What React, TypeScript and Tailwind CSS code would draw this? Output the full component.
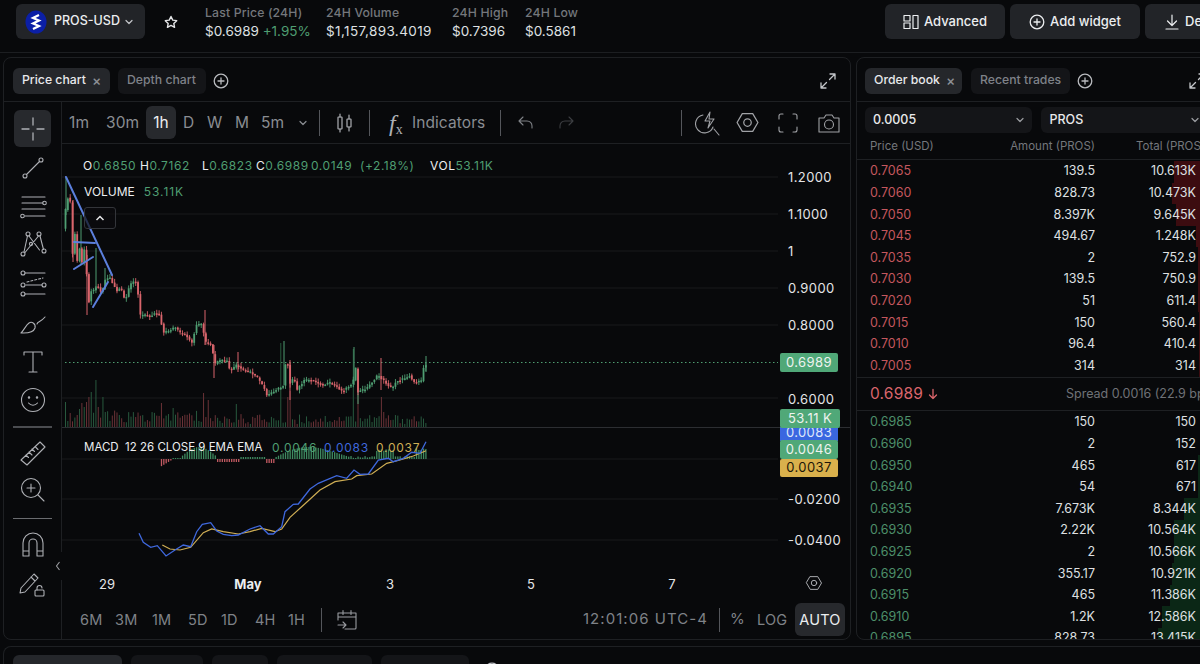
import { ReactNode } from "react";

const GREEN = "#4f9e72";
const RED = "#d9656c";

// closing price path of the candles, in page pixels
const path: [number, number][] = [
  [65, 214], [67, 198], [70, 197], [72, 258], [75, 233], [77, 262], [80, 246], [82, 264], [84, 248], [86, 264],
  [88, 300], [90, 303], [92, 283], [95, 297], [97, 274], [99, 295], [103, 287], [106, 278], [110, 278], [113, 284],
  [117, 291], [121, 287], [123, 298], [126, 298], [130, 285], [134, 281], [137, 283], [140, 315], [145, 315],
  [150, 316], [155, 313], [160, 315], [163, 333], [170, 330], [175, 327], [180, 333], [186, 335], [192, 343],
  [196, 325], [202, 324], [205, 342], [212, 345], [214, 365], [220, 360], [227, 361], [230, 371], [237, 365],
  [243, 370], [250, 372], [257, 377], [264, 388], [267, 396], [272, 392], [277, 389], [283, 387], [285, 364],
  [288, 365], [290, 383], [294, 378], [297, 390], [301, 384], [305, 380], [312, 380], [318, 383], [323, 385],
  [330, 383], [336, 386], [342, 391], [348, 387], [353, 382], [356, 367], [358, 392], [362, 390], [367, 388],
  [372, 382], [378, 375], [381, 378], [385, 382], [388, 385], [392, 389], [396, 381], [403, 379], [410, 375],
  [413, 382], [418, 382], [422, 381], [423, 368], [426, 365],
];

function closeAt(x: number) {
  for (let i = 1; i < path.length; i++) {
    if (x <= path[i][0]) {
      const [x0, y0] = path[i - 1];
      const [x1, y1] = path[i];
      return y0 + ((y1 - y0) * (x - x0)) / (x1 - x0);
    }
  }
  return path[path.length - 1][1];
}

function rnd(i: number) {
  const v = Math.sin(i * 12.9898) * 43758.5453;
  return v - Math.floor(v);
}

const candles = Array.from({ length: 155 }, (_, i) => {
  const x = 65.5 + i * 2.34;
  const c = closeAt(x) + (rnd(i) - 0.5) * 2;
  const o = closeAt(x - 2.34);
  return { x, o, c, hi: Math.min(o, c) - rnd(i + 300) * 4, lo: Math.max(o, c) + rnd(i + 600) * 4 };
});

const wicks: [number, number, number, string][] = [
  [66, 178, 215, GREEN], [73, 200, 262, RED], [81, 215, 265, GREEN], [87, 255, 315, RED], [96, 248, 290, GREEN],
  [105, 268, 290, GREEN], [205, 310, 345, RED], [214, 345, 378, RED], [238, 352, 372, RED], [284, 341, 385, GREEN],
  [290, 360, 400, RED], [354, 347, 385, GREEN], [358, 370, 404, GREEN], [381, 358, 390, RED], [426, 356, 372, GREEN],
];

const volSpikes: Record<number, number> = {
  0: 25, 2: 14, 5: 12, 6: 18, 7: 24, 8: 20, 9: 25, 10: 30, 11: 35, 13: 47, 14: 20, 16: 30, 17: 15,
  41: 24, 46: 19, 59: 34, 61: 27, 73: 23, 92: 84, 95: 30, 96: 36, 123: 78, 125: 33, 135: 30, 136: 15,
};

const macdBars = Array.from({ length: 155 }, (_, i) => {
  const x = 65.5 + i * 2.34;
  let h = 0;
  if (x > 160 && x < 173) h = -8 + (x - 160) * 0.6;
  else if (x >= 173 && x < 182) h = 1;
  else if (x >= 182 && x < 216) h = 3 + 9 * Math.sin(((x - 182) / 34) * Math.PI);
  else if (x >= 216 && x < 240) h = -3;
  else if (x >= 240 && x < 265) h = 2;
  else if (x >= 265 && x < 276) h = -4;
  else if (x >= 276 && x < 350) h = 2 + 13 * Math.sin(((x - 276) / 74) * Math.PI) * (1 - (x - 276) / 150);
  else if (x >= 350) h = 1 + rnd(i) * 2 + (x > 375 && x < 395 ? 7 : x > 415 ? 8 : 0);
  return { x, h };
});

// MACD lines noted in 3x zoom coordinates
const toPts = (a: number[][]) => a.map(([x, y]) => `${(x / 3).toFixed(1)},${(330 + y / 3).toFixed(1)}`).join(" ");
const macdLine = toPts([
  [417, 610], [430, 637], [452, 652], [472, 647], [498, 678], [525, 660], [550, 645], [572, 650], [590, 605], [607, 583],
  [632, 578], [650, 603], [670, 613], [695, 617], [715, 615], [750, 597], [780, 587], [805, 612], [820, 612], [845, 590],
  [855, 545], [880, 523], [895, 522], [930, 477], [955, 460], [1010, 437], [1040, 445], [1062, 420], [1080, 433],
  [1105, 432], [1135, 390], [1165, 385], [1180, 395], [1210, 385], [1235, 367], [1260, 370], [1278, 335],
]);
const signalLine = toPts([
  [487, 645], [510, 657], [540, 660], [572, 652], [610, 608], [635, 597], [670, 605], [715, 612], [750, 605], [785, 595],
  [825, 605], [845, 597], [870, 562], [905, 530], [960, 480], [1005, 455], [1055, 447], [1070, 437], [1115, 432],
  [1160, 400], [1200, 390], [1240, 378], [1278, 362],
]);

const asks = [
  ["0.7065", "139.5", "10.613K", 26], ["0.7060", "828.73", "10.473K", 28], ["0.7050", "8.397K", "9.645K", 24],
  ["0.7045", "494.67", "1.248K", 4], ["0.7035", "2", "752.9", 2], ["0.7030", "139.5", "750.9", 2],
  ["0.7020", "51", "611.4", 2], ["0.7015", "150", "560.4", 1], ["0.7010", "96.4", "410.4", 1], ["0.7005", "314", "314", 1],
] as const;

const bids = [
  ["0.6985", "150", "150", 0], ["0.6960", "2", "152", 0], ["0.6950", "465", "617", 2], ["0.6940", "54", "671", 2],
  ["0.6935", "7.673K", "8.344K", 16], ["0.6930", "2.22K", "10.564K", 26], ["0.6925", "2", "10.566K", 26],
  ["0.6920", "355.17", "10.921K", 28], ["0.6915", "465", "11.386K", 30], ["0.6910", "1.2K", "12.586K", 38],
  ["0.6895", "828.73", "13.415K", 42],
] as const;

function Ico({ size = 24, box = 24, sw = 1.1, children }: { size?: number; box?: number; sw?: number; children: ReactNode }) {
  return (
    <svg width={size} height={size} viewBox={`0 0 ${box} ${box}`} fill="none" stroke="currentColor" strokeWidth={sw} strokeLinecap="round" strokeLinejoin="round">
      {children}
    </svg>
  );
}

function PlusCircle({ size = 16 }: { size?: number }) {
  return (
    <Ico size={size} box={16} sw={1.3}>
      <circle cx="8" cy="8" r="6.8" />
      <path d="M8 5v6M5 8h6" />
    </Ico>
  );
}

function Expand() {
  return (
    <Ico size={18} box={18} sw={1.3}>
      <path d="M11 2h5v5M16 2l-5.5 5.5M7 16H2v-5M2 16l5.5-5.5" />
    </Ico>
  );
}

function Chevron({ size = 12 }: { size?: number }) {
  return (
    <Ico size={size} box={12} sw={1.2}>
      <path d="M3 4.5 6 7.5 9 4.5" />
    </Ico>
  );
}

function Hex({ size = 24 }: { size?: number }) {
  return (
    <Ico size={size} box={24} sw={1.2}>
      <path d="M7 3.5h10L22 12l-5 8.5H7L2 12z" />
      <circle cx="12" cy="12" r="3.6" />
    </Ico>
  );
}

function TabButton({ label, width, active, close }: { label: string; width: string; active?: boolean; close?: boolean }) {
  return (
    <div className={`h-[26px] shrink-0 whitespace-nowrap pl-[9px] rounded-md flex items-center gap-[6px] text-[12.25px] font-medium ${width} ${active ? "bg-[#25272b] text-[#e8e9eb]" : "bg-[#141518] text-[#7f8288]"}`}>
      {label}
      {close && <span className="text-[#8d9095] text-[14px] leading-none">×</span>}
    </div>
  );
}

function Sep({ h = "h-[26px]" }: { h?: string }) {
  return <div className={`w-px ${h} bg-[#54565b]`} />;
}

function ToolBtn({ children, y, active }: { children: ReactNode; y: string; active?: boolean }) {
  return <div className={`w-[37px] flex items-center justify-center shrink-0 ${y} ${active ? "bg-[#27292d] rounded-md" : ""}`}>{children}</div>;
}

function LeftToolbar() {
  return (
    <div className="w-[58px] shrink-0 border-r border-[#1e2023] flex flex-col items-center pt-[8px] text-[#aeb0b5]">
      <ToolBtn y="h-[37px]" active>
        <Ico size={26} box={26} sw={1.3}>
          <path d="M13 2v7M13 17v7M2 13h7M17 13h7" />
        </Ico>
      </ToolBtn>
      <ToolBtn y="h-[38px] mt-[2px]">
        <Ico size={26} box={26}>
          <circle cx="21" cy="5" r="2" /><circle cx="5" cy="21" r="2" /><path d="M19.5 6.5 6.5 19.5" />
        </Ico>
      </ToolBtn>
      <ToolBtn y="h-[38px]">
        <Ico size={28} box={28}>
          <path d="M3 5h23M3 11h21M3 17h23M6 24h20" /><circle cx="25.5" cy="11" r="1.8" /><circle cx="3.5" cy="24" r="1.8" />
        </Ico>
      </ToolBtn>
      <ToolBtn y="h-[38px]">
        <Ico size={28} box={28}>
          <circle cx="9" cy="4" r="2" /><circle cx="20" cy="4" r="2" /><circle cx="4" cy="24" r="2" /><circle cx="25" cy="21" r="2" /><circle cx="12" cy="14" r="1.6" />
          <path d="M8.5 6 5 22M10 6l10.500 14M21 6l3.500 13.500M19.500 6 6 22.500" />
        </Ico>
      </ToolBtn>
      <ToolBtn y="h-[40px]">
        <Ico size={28} box={28}>
          <path d="M6 4h20M6 25h20M7 16h16" />
          <path d="M8 13l16-4" strokeDasharray="2 2" />
          <circle cx="4" cy="4" r="2" /><circle cx="4" cy="16" r="2" /><circle cx="25" cy="16" r="2" /><circle cx="4" cy="25" r="2" />
        </Ico>
      </ToolBtn>
      <ToolBtn y="h-[40px]">
        <Ico size={28} box={28}>
          <path d="M2 24c3 0 12 1 14-5 1-4-3-7-6-5-3 2-5 7-8 10zM18 15c1-3 3-1 8-7" />
        </Ico>
      </ToolBtn>
      <ToolBtn y="h-[38px]">
        <Ico size={26} box={26}>
          <path d="M4 6V3h18v3M13 3v20M9 23h8" />
        </Ico>
      </ToolBtn>
      <ToolBtn y="h-[38px]">
        <Ico size={26} box={26}>
          <circle cx="13" cy="13" r="11.500" /><circle cx="9" cy="10.500" r=".7" /><circle cx="17" cy="10.500" r=".7" /><path d="M8.500 16c2.500 3 6.500 3 9 0" />
        </Ico>
      </ToolBtn>
      <div className="w-[39px] h-[2px] bg-[#4a4c50] mt-[7px]" />
      <ToolBtn y="h-[36px] mt-[7px]">
        <Ico size={28} box={28}>
          <path d="M2 21 21 3l5 5L8 26zM7 16l2.500 2.500M10 13l3 3M13 10l2.500 2.500M16 7.500l3 3" />
        </Ico>
      </ToolBtn>
      <ToolBtn y="h-[36px] mt-[1px]">
        <Ico size={26} box={26}>
          <circle cx="11" cy="11" r="9.500" /><path d="M11 7v8M7 11h8M18 18l6 6" />
        </Ico>
      </ToolBtn>
      <div className="w-[39px] h-[1px] bg-[#6a6c70] mt-[10px]" />
      <ToolBtn y="h-[36px] mt-[7px]">
        <Ico size={26} box={26}>
          <path d="M3 25V12a10 10 0 0 1 20 0v13h-6V12a4 4 0 0 0-8 0v13zM3 20h6M17 20h6" />
        </Ico>
      </ToolBtn>
      <ToolBtn y="h-[36px] mt-[4px]">
        <Ico size={28} box={28}>
          <path d="M2 18 15 4l4 4L6 22l-5 1zM12 7l4 4" />
          <rect x="16" y="20" width="9" height="6" rx="1" /><path d="M18 20v-2a2.500 2.500 0 0 1 5 0" />
        </Ico>
      </ToolBtn>
    </div>
  );
}

function ChartToolbar() {
  return (
    <div className="h-[42px] shrink-0 border-b border-[#1e2023] flex items-center pl-[7px] text-[#8a8d92] text-[15.5px] tracking-[0.1px] relative">
      <span className="w-[37px]">1m</span>
      <span className="w-[40px]">30m</span>
      <span className="w-[30px] h-[33px] bg-[#27292d] text-[#eceef0] rounded-md flex items-center justify-center">1h</span>
      <span className="ml-[7px] w-[24px]">D</span>
      <span className="w-[28px]">W</span>
      <span className="w-[26px]">M</span>
      <span className="w-[33px]">5m</span>
      <span className="ml-[3px] w-[16px]"><Chevron /></span>
      <span className="ml-[6px]"><Sep /></span>
      <span className="ml-[15px] text-[#aeb0b5]">
        <Ico size={20} box={20} sw={1.2}>
          <rect x="3" y="4" width="4" height="12" rx=".5" /><rect x="12" y="6" width="4" height="8" rx=".5" /><path d="M5 1v3M5 16v3M14 2v4M14 14v4" />
        </Ico>
      </span>
      <span className="ml-[14px]"><Sep /></span>
      <span className="ml-[19px] text-[#aeb0b5] font-['Liberation_Serif',serif] italic text-[24px] leading-none">f<sub className="text-[14px] not-italic">x</sub></span>
      <span className="ml-[9px] text-[15.5px]">Indicators</span>
      <span className="ml-[15px]"><Sep /></span>
      <span className="ml-[16px] text-[#7e8186]">
        <Ico size={18} box={18}>
          <path d="M6 3 2 7l4 4M2 7h8c3 0 5 2 5 5v2" />
        </Ico>
      </span>
      <span className="ml-[22px] text-[#3c3e42]">
        <Ico size={18} box={18}>
          <path d="m12 3 4 4-4 4M16 7H8c-3 0-5 2-5 5v2" />
        </Ico>
      </span>
      <div className="ml-auto flex items-center pr-[9px] text-[#a0a2a6]">
        <Sep />
        <span className="ml-[12px] w-[26px]">
          <Ico size={26} box={26}>
            <path d="M9 5a9 9 0 1 0 10 12M20 19l5 6M16 2l-5 9h5l-2 7 6-9h-5z" />
          </Ico>
        </span>
        <span className="ml-[15px]"><Hex size={25} /></span>
        <span className="ml-[17px]">
          <Ico size={22} box={22}>
            <path d="M2 7V4a2 2 0 0 1 2-2h2M16 2h2a2 2 0 0 1 2 2v3M20 15v3a2 2 0 0 1-2 2h-2M6 20H4a2 2 0 0 1-2-2v-3" />
          </Ico>
        </span>
        <span className="ml-[18px]">
          <Ico size={24} box={24}>
            <path d="M2 7h5l2-3h6l2 3h5v14H2z" /><circle cx="12" cy="13.500" r="4.500" />
          </Ico>
        </span>
      </div>
    </div>
  );
}

function ChartCanvas() {
  const grid = [177, 214, 251, 288, 325, 398];
  const gridLow = [459, 499, 540];
  const axis: [string, number, number][] = [
    ["1.2000", 788, 177], ["1.1000", 788, 214], ["1", 788, 251], ["0.9000", 788, 288], ["0.8000", 788, 325], ["0.6000", 788, 399],
    ["-0.0200", 788, 499], ["-0.0400", 788, 540],
  ];
  return (
    <div className="relative flex-1">
      <svg width="788" height="456" viewBox="62 144 788 456" className="block font-['Inter',sans-serif]">
        {grid.map((y) => <line key={y} x1="62" x2="778" y1={y} y2={y} stroke="#191a1d" />)}
        {gridLow.map((y) => <line key={y} x1="62" x2="778" y1={y} y2={y} stroke="#191a1d" />)}
        <line x1="62" x2="850" y1="427.500" y2="427.500" stroke="#2c2e32" />
        <line x1="65" x2="778" y1="362.500" y2="362.500" stroke={GREEN} strokeDasharray="1.500 2.500" />

        {candles.map((k, i) => {
          const h = volSpikes[i] ?? 3 + rnd(i + 900) * (i < 60 ? 14 : 10);
          return <rect key={i} x={k.x - 0.5} y={427 - h} width="1" height={h} fill={k.c < k.o ? "#28593e" : "#6a3237"} />;
        })}
        {wicks.map(([x, a, b, c], i) => <line key={i} x1={x} x2={x} y1={a} y2={b} stroke={c} strokeWidth="1" />)}
        {candles.map((k, i) => {
          const col = k.c < k.o ? GREEN : RED;
          const top = Math.min(k.o, k.c);
          const h = Math.max(Math.abs(k.o - k.c), 1.500);
          return (
            <g key={i}>
              <line x1={k.x} x2={k.x} y1={k.hi} y2={k.lo} stroke={col} strokeWidth=".9" />
              <rect x={k.x - 0.9} y={top} width="1.800" height={h} fill={col} />
            </g>
          );
        })}

        <g stroke="#5b7fdc" strokeWidth="2" strokeLinecap="round">
          <line x1="66" y1="177" x2="112" y2="275" />
          <line x1="74" y1="242" x2="95" y2="243" />
          <line x1="74" y1="269" x2="93" y2="257" />
          <line x1="93" y1="307" x2="108" y2="282" />
        </g>

        {macdBars.map((b, i) => b.h !== 0 && (
          <rect key={i} x={b.x - 0.6} y={b.h > 0 ? 459 - b.h : 459} width="1.300" height={Math.abs(b.h)} fill={b.h > 0 ? "#3f8a60" : "#c25a62"} />
        ))}
        <polyline points={signalLine} fill="none" stroke="#cfae55" strokeWidth="1.200" />
        <polyline points={macdLine} fill="none" stroke="#3f68dd" strokeWidth="1.300" />

        {axis.map(([t, x, y]) => (
          <text key={t} x={x} y={y + 5} fill="#e4e5e7" fontSize="13" letterSpacing=".4">{t}</text>
        ))}
        <text x="107" y="589" textAnchor="middle" fill="#e4e5e7" fontSize="13">29</text>
        <text x="248" y="589" textAnchor="middle" fill="#eceef0" fontSize="13" fontWeight="700">May</text>
        <text x="390" y="589" textAnchor="middle" fill="#e4e5e7" fontSize="13">3</text>
        <text x="531" y="589" textAnchor="middle" fill="#e4e5e7" fontSize="13">5</text>
        <text x="672" y="589" textAnchor="middle" fill="#e4e5e7" fontSize="13">7</text>
      </svg>

      {/* legends */}
      <div className="absolute left-[21px] top-[13px] flex items-center text-[12px] tracking-[0.55px] text-[#4f9e72] whitespace-nowrap">
        <span className="w-[57px]"><b className="font-normal text-[#eceef0]">O</b>0.6850</span>
        <span className="w-[62px]"><b className="font-normal text-[#eceef0]">H</b>0.7162</span>
        <span className="w-[54px]"><b className="font-normal text-[#eceef0]">L</b>0.6823</span>
        <span className="w-[55px]"><b className="font-normal text-[#eceef0]">C</b>0.6989</span>
        <span className="w-[49px]">0.0149</span>
        <span className="w-[70px]">(+2.18%)</span>
        <span><b className="font-normal text-[#eceef0]">VOL</b>53.11K</span>
      </div>
      <div className="absolute left-[22px] top-[39px] flex items-center gap-[9px] text-[12px] text-[#eceef0] whitespace-nowrap">
        VOLUME <span className="text-[#4f9e72] tracking-[0.9px]">53.11K</span>
      </div>
      <div className="absolute left-[22px] top-[63px] w-[32px] h-[22px] border border-[#33353a] rounded-[3px] flex items-center justify-center text-[#e4e5e7] bg-[#0b0c0eb0]">
        <svg width="12" height="12" viewBox="0 0 12 12" fill="none" stroke="currentColor" strokeWidth="1.500"><path d="M2.500 8 6 4.500 9.500 8" /></svg>
      </div>
      <div className="absolute left-[22px] top-[295px] flex items-center text-[11.5px] text-[#eceef0] whitespace-nowrap">
        <span className="w-[188px]">MACD&nbsp; 12 26 CLOSE 9 EMA EMA</span>
        <span className="w-[52px] text-[#4f9e72] text-[12px] tracking-[0.75px]">0.0046</span>
        <span className="w-[52px] text-[#3f68dd] text-[12px] tracking-[0.75px]">0.0083</span>
        <span className="text-[#cfae55] text-[12px] tracking-[0.75px]">0.0037</span>
      </div>

      {/* price tags */}
      <div className="absolute left-[718px] top-[209px] w-[58px] h-[19px] rounded-[2px] bg-[#50a878] text-[#eef3ef] text-[13px] tracking-[0.4px] flex items-center justify-center">0.6989</div>
      <div className="absolute left-[718px] top-[283px] w-[58px] h-[14px] bg-[#3a66e0] text-[#dfe6fa] text-[13px] tracking-[0.4px] leading-[11px] flex justify-center overflow-hidden">0.0083</div>
      <div className="absolute left-[718px] top-[296px] w-[58px] h-[19px] rounded-[2px] bg-[#50a878] text-[#eef3ef] text-[13px] tracking-[0.4px] flex items-center justify-center">0.0046</div>
      <div className="absolute left-[718px] top-[315px] w-[58px] h-[18px] rounded-[2px] bg-[#d9b04c] text-[#1c1608] text-[13px] tracking-[0.4px] flex items-center justify-center">0.0037</div>
      <div className="absolute left-[718px] top-[265px] w-[60px] h-[19px] rounded-[2px] bg-[#50a878] text-[#eef3ef] text-[13px] tracking-[0.4px] flex items-center justify-center">53.11 K</div>

      <div className="absolute left-[743px] top-[430px] text-[#b9bbbf]"><Hex size={18} /></div>
      <div className="absolute -left-[10px] top-[408px] w-[12px] h-[28px] bg-[#08090b] text-[#9b9da1] flex items-center justify-center">
        <svg width="8" height="12" viewBox="0 0 8 12" fill="none" stroke="currentColor" strokeWidth="1.100"><path d="M5.500 2 2.500 6l3 4" /></svg>
      </div>
    </div>
  );
}

function ChartBottomBar() {
  return (
    <div className="h-[39px] shrink-0 flex items-center pl-[18px] pr-[5px] text-[#7f8287] text-[14.5px] tracking-[0.2px]">
      <span className="w-[35px]">6M</span>
      <span className="w-[37px]">3M</span>
      <span className="w-[36px]">1M</span>
      <span className="w-[33px]">5D</span>
      <span className="w-[34px]">1D</span>
      <span className="w-[33px]">4H</span>
      <span className="w-[21px]">1H</span>
      <span className="ml-[12px]"><Sep h="h-[24px]" /></span>
      <span className="ml-[14px] text-[#9a9ca1]">
        <Ico size={22} box={22}>
          <path d="M2 11V4h18v15a1 1 0 0 1-1 1H9M2 8h18M7 1.500v4M15 1.500v4M2 16h8M7 13l3 3-3 3" />
        </Ico>
      </span>
      <span className="ml-auto tracking-[1.05px] text-[15px]">12:01:06 UTC-4</span>
      <span className="ml-[11px]"><Sep h="h-[24px]" /></span>
      <span className="ml-[10px] text-[15px]">%</span>
      <span className="ml-[12px] w-[29px]">LOG</span>
      <span className="ml-[9px] w-[50px] h-[33px] bg-[#27292d] text-[#eceef0] rounded-md flex items-center justify-center">AUTO</span>
    </div>
  );
}

function BookRow({ row, color, barColor }: { row: readonly [string, string, string, number]; color: string; barColor: string }) {
  return (
    <div className="relative h-[21.6px] flex items-center pl-[13px] text-[12.5px] text-[#dfe0e2]">
      <div className="absolute right-0 top-0 bottom-0" style={{ width: row[3], background: barColor }} />
      <span className="relative w-[120px]" style={{ color }}>{row[0]}</span>
      <span className="relative w-[105px] text-right">{row[1]}</span>
      <span className="relative w-[101px] text-right">{row[2]}</span>
    </div>
  );
}

function OrderBook() {
  return (
    <div className="w-[360px] shrink-0 h-full border border-[#1e2023] rounded-lg overflow-hidden flex flex-col">
      <div className="h-[44px] shrink-0 border-b border-[#1e2023] flex items-center pl-[8px] pt-[2px] gap-[9px]">
        <TabButton label="Order book" width="w-[97px]" active close />
        <TabButton label="Recent trades" width="w-[99px]" />
        <span className="-ml-[2px] text-[#b9bbbf]"><PlusCircle /></span>
        <span className="ml-[86px] text-[#c4c6ca]"><Expand /></span>
      </div>
      <div className="flex gap-[9px] px-[8px] pt-[5px] shrink-0">
        <div className="w-[168px] h-[26px] rounded-md bg-[#141518] text-[#e8e9eb] text-[12.5px] font-medium flex items-center justify-between pl-[8px] pr-[6px]">
          0.0005 <span className="text-[#9b9da1]"><Chevron /></span>
        </div>
        <div className="w-[168px] h-[26px] rounded-md bg-[#141518] text-[#e8e9eb] text-[12.5px] font-medium flex items-center justify-between pl-[9px] pr-[6px]">
          PROS <span className="text-[#9b9da1]"><Chevron /></span>
        </div>
      </div>
      <div className="h-[27px] shrink-0 border-b border-[#1e2023] flex items-center pl-[13px] pt-[2px] text-[11.5px] text-[#74777c] whitespace-nowrap">
        <span className="w-[120px]">Price (USD)</span>
        <span className="w-[105px] text-right">Amount (PROS)</span>
        <span className="w-[110px] text-right">Total (PROS)</span>
      </div>
      <div className="w-[343px] shrink-0 pt-[1px]">
        {asks.map((r) => <BookRow key={r[0]} row={r} color="#c4575e" barColor="#3c0c10" />)}
      </div>
      <div className="h-[34px] shrink-0 border-y border-[#1e2023] flex items-center pl-[13px] relative">
        <span className="text-[#d9656c] text-[15.5px] tracking-[0.2px]">0.6989</span>
        <span className="ml-[4px] text-[#d9656c]">
          <Ico size={12} box={12} sw={1.300}><path d="M6 1.500v9M2.500 7 6 10.500 9.500 7" /></Ico>
        </span>
        <span className="absolute left-[209px] text-[12.5px] text-[#6f7277] whitespace-nowrap">Spread 0.0016 (22.9 bps)</span>
      </div>
      <div className="w-[343px] pt-[1px] flex-1 overflow-hidden">
        {bids.map((r) => <BookRow key={r[0]} row={r} color="#4d8f6a" barColor="#0b2716" />)}
      </div>
    </div>
  );
}

function Stat({ label, width, children }: { label: string; width?: string; children: ReactNode }) {
  return (
    <div className={width}>
      <div className="text-[12.25px] tracking-[0.15px] font-medium text-[#74777c] leading-[18px] whitespace-nowrap">{label}</div>
      <div className="text-[13.5px] leading-[18px] whitespace-nowrap text-[#dfe0e2]">{children}</div>
    </div>
  );
}

export default function App() {
  return (
    <div className="w-[1200px] h-[664px] overflow-hidden bg-[#08090b] text-[#eceef0] font-['Inter',sans-serif] flex flex-col">
      <header className="h-[53px] shrink-0 border-b border-[#1c1e21] flex items-start pl-[16px] pt-[4px]">
        <div className="w-[129px] h-[35px] rounded-md bg-[#222428] flex items-center pl-[9px]">
          <svg width="22" height="24" viewBox="0 0 22 24">
            <ellipse cx="11" cy="12" rx="10.500" ry="11.500" fill="#0b1fa6" />
            <path d="M14 5 8 8l6 2.500-6 3 6 2.500-6 3" fill="none" stroke="#fff" strokeWidth="2.200" />
          </svg>
          <span className="ml-[7px] text-[12.5px] font-medium whitespace-nowrap">PROS-USD</span>
          <span className="ml-[3px] text-[#c4c6ca]"><Chevron /></span>
        </div>
        <span className="ml-[19px] mt-[11px] text-[#e4e5e7]">
          <svg width="14" height="14" viewBox="0 0 24 24" fill="none" stroke="currentColor" strokeWidth="2.400" strokeLinejoin="round"><path d="m12 2.500 3 6.300 6.800.9-5 4.700 1.300 6.800-6.100-3.300-6.100 3.300 1.300-6.800-5-4.700 6.800-.9z" /></svg>
        </span>
        <div className="ml-[27px] flex">
          <Stat label="Last Price (24H)" width="w-[121px]">$0.6989 <span className="text-[#4f9e72]">+1.95%</span></Stat>
          <Stat label="24H Volume" width="w-[126px]"><span className="tracking-[0.4px]">$1,157,893.4019</span></Stat>
          <Stat label="24H High" width="w-[73px]">$0.7396</Stat>
          <Stat label="24H Low">$0.5861</Stat>
        </div>
        <div className="ml-auto flex gap-[5px] -mr-[60px]">
          <div className="w-[120px] h-[35px] rounded-md bg-[#222428] flex items-center justify-center gap-[5px] text-[13px] font-medium">
            <Ico size={16} box={16} sw={1.200}>
              <rect x="1" y="1.500" width="6" height="5.500" /><rect x="1" y="9" width="6" height="5.500" /><rect x="10" y="1.500" width="5" height="13" />
            </Ico>
            Advanced
          </div>
          <div className="w-[130px] h-[35px] rounded-md bg-[#222428] flex items-center justify-center gap-[5px] text-[13px] font-medium">
            <PlusCircle />
            Add widget
          </div>
          <div className="w-[115px] h-[35px] rounded-md bg-[#222428] flex items-center pl-[19px] gap-[5px] text-[13px] font-medium">
            <Ico size={16} box={16} sw={1.200}><path d="M8 1v10M3.500 7 8 11.500 12.500 7M2 15h12" /></Ico>
            Deposit
          </div>
        </div>
      </header>

      <main className="h-[587px] shrink-0 flex gap-[5px] pl-[3px] pt-[4px]">
        <section className="w-[848px] shrink-0 h-full border border-[#1e2023] rounded-lg flex flex-col overflow-hidden">
          <div className="h-[44px] shrink-0 border-b border-[#1e2023] flex items-center pl-[9px] pt-[2px] gap-[8px]">
            <TabButton label="Price chart" width="w-[97px]" active close />
            <TabButton label="Depth chart" width="w-[88px]" />
            <span className="-ml-[1px] text-[#b9bbbf]"><PlusCircle /></span>
            <span className="ml-auto mr-[13px] text-[#c4c6ca]"><Expand /></span>
          </div>
          <div className="flex-1 flex min-h-0">
            <LeftToolbar />
            <div className="flex-1 flex flex-col min-w-0">
              <ChartToolbar />
              <ChartCanvas />
              <ChartBottomBar />
            </div>
          </div>
        </section>
        <OrderBook />
      </main>

      <div className="flex-1 mt-[6px] ml-[3px] border-t border-l border-[#1e2023] rounded-tl-lg pt-[8px] pl-[9px] flex gap-[9px] overflow-hidden">
        <div className="w-[109px] h-[27px] rounded-md bg-[#25272b]" />
        <div className="w-[72px] h-[27px] rounded-md bg-[#141518]" />
        <div className="w-[56px] h-[27px] rounded-md bg-[#141518]" />
        <div className="w-[95px] h-[27px] rounded-md bg-[#141518]" />
        <div className="w-[88px] h-[27px] rounded-md bg-[#141518]" />
        <span className="text-[#b9bbbf] ml-[6px] mt-[7px]"><PlusCircle /></span>
      </div>
    </div>
  );
}
